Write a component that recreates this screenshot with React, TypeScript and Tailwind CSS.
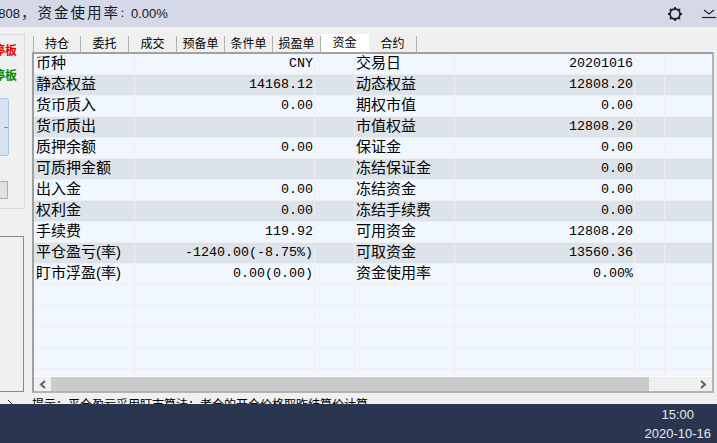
const font = "font-['Liberation_Mono','Noto_Sans_CJK_SC',monospace]";
const labelFont = "font-['Liberation_Sans','Noto_Sans_CJK_SC',sans-serif]";

const tabs = ['持仓', '委托', '成交', '预备单', '条件单', '损盈单', '资金', '合约'];

const rows = [
  ['币种', 'CNY', '交易日', '20201016'],
  ['静态权益', '14168.12', '动态权益', '12808.20'],
  ['货币质入', '0.00', '期权市值', '0.00'],
  ['货币质出', '', '市值权益', '12808.20'],
  ['质押余额', '0.00', '保证金', '0.00'],
  ['可质押金额', '', '冻结保证金', '0.00'],
  ['出入金', '0.00', '冻结资金', '0.00'],
  ['权利金', '0.00', '冻结手续费', '0.00'],
  ['手续费', '119.92', '可用资金', '12808.20'],
  ['平仓盈亏(率)', '-1240.00(-8.75%)', '可取资金', '13560.36'],
  ['盯市浮盈(率)', '0.00(0.00)', '资金使用率', '0.00%'],
  ['', '', '', ''],
  ['', '', '', ''],
  ['', '', '', ''],
  ['', '', '', ''],
  ['', '', '', ''],
];

function Row({ cells, alt }: { cells: string[]; alt: boolean }) {
  const cell = 'h-full border-r border-[#f0eeee] shrink-0 whitespace-nowrap';
  const label = `${labelFont} text-[15px] leading-[17px]`;
  const value = 'text-right text-[13.33px] leading-[17px] pr-[1px] pt-[1px]';
  return (
    <div className={`flex h-[21px] shrink-0 border-b border-[#f0eeee] text-black ${alt ? 'bg-[#dde3ea]' : 'bg-[#f0f7ff]'}`}>
      <div className={`${cell} ${label} w-[101px] pl-[2px]`}>{cells[0]}</div>
      <div className={`${cell} ${value} w-[180px]`}>{cells[1]}</div>
      <div className={`${cell} w-[40px]`} />
      <div className={`${cell} ${label} w-[100px] pl-[1px]`}>{cells[2]}</div>
      <div className={`${cell} ${value} w-[180px]`}>{cells[3]}</div>
      <div className={`${cell} w-[30px]`} />
      <div className="h-full flex-1" />
    </div>
  );
}

export default function App() {
  return (
    <div className={`flex h-[443px] w-[717px] flex-col overflow-hidden bg-[#f0f0f0] ${font}`}>
      {/* Top status bar */}
      <div className="flex h-[27px] shrink-0 items-center justify-between bg-[#d5d8e6] pr-[1px] text-[#101828]">
        <div className={`${labelFont} ml-[-9px] flex items-center text-[14.5px] whitespace-nowrap`}>
          <span className="text-[13px]">2808</span>
          <span className="ml-[1px] tracking-[2px]">，资金使用率</span>
          <span className="text-[10px]">：</span>
          <span className="ml-[1px] text-[13px]">0.00%</span>
        </div>
        <div className="flex items-center gap-[19px]">
          <svg width="16" height="16" viewBox="0 0 16 16" fill="none">
            <circle cx="8" cy="8" r="5" stroke="#222" strokeWidth="1.8" />
            <path d="M8 1v2M8 13v2M1 8h2M13 8h2M3 3l1.500 1.500M11.500 11.500L13 13M13 3l-1.500 1.500M4.500 11.500L3 13" stroke="#222" strokeWidth="1.800" />
          </svg>
          <svg width="14" height="14" viewBox="0 0 14 14" fill="none">
            <path d="M2 3l5 4 5-4" stroke="#222" strokeWidth="1.200" />
            <path d="M0 10.500h14" stroke="#222" strokeWidth="1.200" />
          </svg>
        </div>
      </div>

      {/* Body */}
      <div className="flex min-h-0 flex-1">
        {/* Left panel, cut off by the picture */}
        <div className="flex w-[32px] shrink-0 flex-col">
          <div className="mt-[7px] flex h-[175px] w-[25px] flex-col border-t border-r border-b border-[#dcdcdc] text-[12px] font-bold">
            <div className="mt-[8px] ml-[-19px] leading-[18px] whitespace-nowrap text-[#f00000]">涨停板</div>
            <div className="mt-[7px] ml-[-19px] leading-[18px] whitespace-nowrap text-[#008a00]">跌停板</div>
            <div className="mt-[12px] ml-[-8px] flex h-[58px] w-[17px] items-center justify-end rounded-[3px] border border-[#a9c4e4] bg-[#d6e4f3]">
              <div className="h-px w-[4px] bg-[#888]" />
            </div>
            <div className="mt-[25px] ml-[-8px] h-[18px] w-[16px] border border-[#adadad] bg-[#e1e1e1]" />
          </div>
          <div className="mt-[27px] h-[156px] w-[24px] border-t border-r border-b border-[#8a8a8a]" />
          <div className="relative mt-[7px]">
            <svg className="absolute top-0 left-[7px]" width="10" height="10" viewBox="0 0 10 10" fill="none">
              <path d="M1 1l4 4-4 4" stroke="#333" />
            </svg>
          </div>
        </div>

        {/* Tabs and table */}
        <div className="flex w-[685px] flex-col">
          <div className="flex h-[25px] shrink-0 items-end pl-px">
            {tabs.map((t, i) => (
              <div
                key={t}
                className={`flex w-[48px] items-center justify-center border-r border-[#b0b0b0] pt-[2px] text-[12px] leading-[14px] whitespace-nowrap ${i === 0 ? 'border-l' : ''} ${t === '资金' ? 'h-[18px] border-transparent bg-white' : 'h-[16px]'}`}
              >
                {t}
              </div>
            ))}
          </div>
          <div className="flex h-[341px] w-[682px] shrink-0 flex-col border-2 border-[#a0a0a0] border-r-[#b4b4b4] border-b-[#b4b4b4] bg-[#f0f7ff]">
            <div className="flex min-h-0 flex-1 flex-col overflow-hidden">
              {rows.map((r, i) => (
                <Row key={i} cells={r} alt={i % 2 === 1 && i < 11} />
              ))}
            </div>
            {/* Horizontal scrollbar */}
            <div className="flex h-[15px] shrink-0 items-center border-t border-white bg-[#f0f0f0]">
              <div className="flex w-[17px] justify-center">
                <svg width="8" height="9" viewBox="0 0 8 9" fill="none">
                  <path d="M6 1L2 4.500l4 3.500" stroke="#606060" strokeWidth="2" />
                </svg>
              </div>
              <div className="h-full w-[598px] bg-[#cbcbcb]" />
              <div className="flex flex-1 justify-end pr-[5px]">
                <svg width="8" height="9" viewBox="0 0 8 9" fill="none">
                  <path d="M2 1l4 3.500L2 8" stroke="#606060" strokeWidth="2" />
                </svg>
              </div>
            </div>
          </div>
          <div className={`${labelFont} h-[11px] overflow-hidden pt-[3px] text-[12px] leading-[18px] whitespace-nowrap text-black`}>
            提示：平仓盈亏采用盯市算法；老仓的开仓价格取昨结算价计算
          </div>
        </div>
      </div>

      {/* Taskbar */}
      <div className="flex h-[39px] shrink-0 justify-end bg-[#2a364f] pr-[6px] font-['Liberation_Sans',sans-serif] text-[13px] leading-[18px] text-[#e6e8ec]">
        <div className="flex flex-col items-center pt-[2px]">
          <span>15:00</span>
          <span className="mt-[1px]">2020-10-16</span>
        </div>
      </div>
    </div>
  );
}
